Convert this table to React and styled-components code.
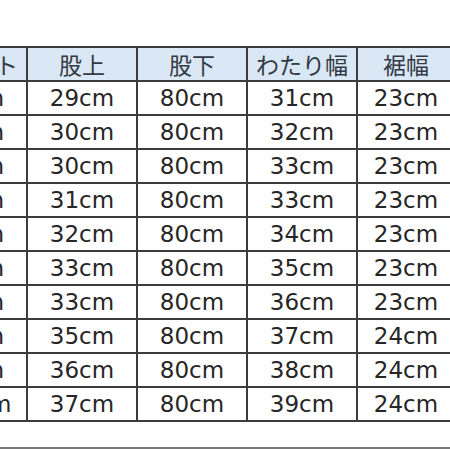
import styled, { createGlobalStyle } from 'styled-components'

const GlobalStyle = createGlobalStyle`
	html, body { margin: 0; padding: 0; background: #fff; }
	body { font-family: "DejaVu Sans", "Noto Sans CJK JP", sans-serif; }
`

const headers = ['ウエスト', '股上', '股下', 'わたり幅', '裾幅']

const rows = [
	['64cm', '29cm', '80cm', '31cm', '23cm'],
	['66cm', '30cm', '80cm', '32cm', '23cm'],
	['68cm', '30cm', '80cm', '33cm', '23cm'],
	['70cm', '31cm', '80cm', '33cm', '23cm'],
	['74cm', '32cm', '80cm', '34cm', '23cm'],
	['78cm', '33cm', '80cm', '35cm', '23cm'],
	['82cm', '33cm', '80cm', '36cm', '23cm'],
	['88cm', '35cm', '80cm', '37cm', '24cm'],
	['94cm', '36cm', '80cm', '38cm', '24cm'],
	['100cm', '37cm', '80cm', '39cm', '24cm']
]

export default function App () {
	return (
		<Page>
			<GlobalStyle />
			<SizeTable>
				<thead>
					<tr>
						{headers.map((h, i) =>
							<HeadCell key={h} $last={i === headers.length - 1}>{h}</HeadCell>
						)}
					</tr>
				</thead>
				<tbody>
					{rows.map((row, i) =>
						<tr key={i}>
							{row.map((v, j) => <Cell key={j}>{v}</Cell>)}
						</tr>
					)}
				</tbody>
			</SizeTable>
			<Rule />
		</Page>
	)
}

const Page = styled.div`
	width: 450px;
	height: 450px;
	overflow: hidden;
	display: flex;
	flex-direction: column;
	padding-top: 46px;
	box-sizing: border-box;
`

const SizeTable = styled.table`
	margin-left: -84px;
	border-collapse: collapse;
	table-layout: fixed;
	width: 560px;
	flex-shrink: 0;
	color: #262626;
`

const HeadCell = styled.th`
	width: ${props => props.$last ? 'auto' : '110px'};
	height: 34px;
	box-sizing: border-box;
	padding: 0 ${props => props.$last ? '20px' : '0'} 0 0;
	border: 2px solid #3c3c3c;
	background: #dae7f4;
	font-family: "Noto Sans CJK JP", sans-serif;
	font-weight: 400;
	font-size: 23px;
	line-height: 1;
	text-align: center;
	color: #333a44;
`

const Cell = styled.td`
	height: 34px;
	box-sizing: border-box;
	padding: 0;
	border: 2px solid #3c3c3c;
	font-size: 23px;
	line-height: 1;
	text-align: center;
	white-space: nowrap;
	&:last-child { padding-right: 20px; }
`

const Rule = styled.div`
	margin-top: auto;
	margin-bottom: 1px;
	height: 2px;
	background: #7a7a7a;
`
